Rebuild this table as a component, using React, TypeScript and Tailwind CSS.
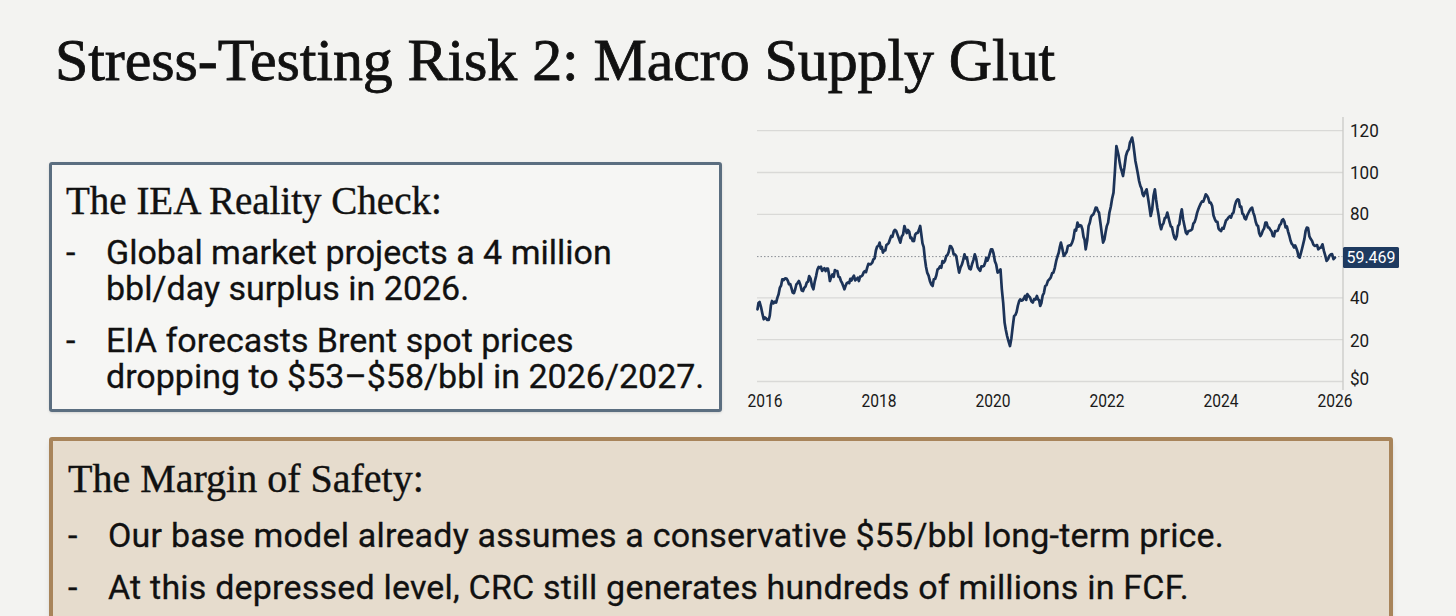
import React from "react";

const RAW: [number, number][] = [
  [65, 600], [70, 578], [80, 630], [92, 632], [100, 575], [110, 580], [125, 510], [135, 508],
  [150, 550], [165, 515], [175, 545], [190, 500], [200, 540], [210, 480], [235, 478], [240, 515],
  [255, 485], [275, 540], [295, 505], [310, 515], [330, 475], [345, 450], [360, 400], [368, 430],
  [385, 390], [400, 365], [410, 400], [420, 350], [440, 395], [458, 350], [475, 490], [488, 530],
  [500, 480], [515, 460], [530, 410], [545, 440], [552, 490], [565, 435], [580, 480], [590, 435],
  [600, 480], [615, 460], [632, 420], [645, 490], [652, 480], [662, 640], [668, 680], [675, 710],
  [685, 620], [700, 570], [720, 560], [730, 580], [740, 560], [748, 590], [760, 530], [770, 510],
  [780, 490], [790, 440], [798, 400], [805, 440], [815, 410], [825, 400], [838, 340], [850, 360],
  [858, 420], [865, 350], [882, 295], [890, 310], [900, 400], [912, 340], [925, 250], [932, 110],
  [940, 160], [948, 200], [955, 140], [962, 120], [970, 85], [978, 155], [990, 230], [998, 260],
  [1005, 240], [1015, 320], [1025, 240], [1040, 360], [1055, 310], [1075, 390], [1090, 300],
  [1100, 370], [1115, 360], [1130, 300], [1148, 255], [1160, 280], [1170, 330], [1185, 365],
  [1200, 330], [1215, 310], [1225, 270], [1245, 330], [1260, 295], [1280, 380], [1295, 340],
  [1310, 380], [1335, 330], [1350, 380], [1375, 445], [1392, 355], [1405, 395], [1420, 420],
  [1430, 405], [1440, 455], [1450, 435], [1460, 445],
];

function buildPath(): string {
  const pts = RAW.map(([zx, zy]) => [730.6 + zx / 2.416, 109.3 + zy / 3]);
  const out: [number, number][] = [];
  let k = 0;
  for (let i = 0; i < pts.length - 1; i++) {
    const [x0, y0] = pts[i];
    const [x1, y1] = pts[i + 1];
    const steps = Math.max(1, Math.round((x1 - x0) / 1.2));
    for (let s = 0; s < steps; s++) {
      const t = s / steps;
      const r = Math.sin((k + 1) * 12.9898) * 43758.5453;
      const n = (r - Math.floor(r) - 0.5) * (s === 0 ? 0 : 6);
      out.push([x0 + (x1 - x0) * t, y0 + (y1 - y0) * t + n]);
      k++;
    }
  }
  const last = pts[pts.length - 1];
  out.push([last[0], last[1]]);
  return out.map(([x, y], i) => `${i === 0 ? "M" : "L"}${x.toFixed(1)} ${y.toFixed(1)}`).join(" ");
}

const LINE = buildPath();

const gridYs = [130.7, 172.5, 214.3, 297.9, 339.7, 381.5];
const yLabels: [string, number][] = [
  ["120", 130],
  ["100", 172],
  ["80", 213],
  ["40", 297],
  ["20", 340],
  ["$0", 378],
];
const xLabels = ["2016", "2018", "2020", "2022", "2024", "2026"];

function Chart() {
  return (
    <svg width={660} height={305} viewBox="0 0 660 305" className="block">
      <g transform="translate(-740,-110)" style={{ fontFamily: "Roboto, 'Liberation Sans', sans-serif" }}>
        {gridYs.map((y) => (
          <line key={y} x1={757} x2={1343} y1={y} y2={y} stroke="#d9d9d7" strokeWidth={1.3} />
        ))}
        <line x1={757} x2={1343} y1={256.6} y2={256.6} stroke="#8a8f96" strokeWidth={1} strokeDasharray="1.5 2" />
        <line x1={1343} x2={1343} y1={117} y2={390} stroke="#c9c9c7" strokeWidth={1.3} />
        <path d={LINE} fill="none" stroke="#1c3358" strokeWidth={2.7} strokeLinejoin="round" strokeLinecap="round" />
        {yLabels.map(([t, y]) => (
          <text key={t} x={1350} y={y + 6.8} fontSize={19} fill="#1a1a1a" textLength={t.length * 9.6} lengthAdjust="spacingAndGlyphs">
            {t}
          </text>
        ))}
        <rect x={1343} y={247} width={56} height={21} rx={1.5} fill="#1e3a60" />
        <text x={1371} y={262.8} fontSize={16} fill="#ffffff" textAnchor="middle" textLength={49} lengthAdjust="spacingAndGlyphs">
          59.469
        </text>
        {xLabels.map((t, i) => (
          <text key={t} x={765 + i * 114} y={406.5} fontSize={19} fill="#1a1a1a" textAnchor="middle" textLength={35} lengthAdjust="spacingAndGlyphs">
            {t}
          </text>
        ))}
      </g>
    </svg>
  );
}

function Bullet({ children }: { children: React.ReactNode }) {
  return (
    <div className="flex">
      <span className="w-[40px] shrink-0">-</span>
      <span>{children}</span>
    </div>
  );
}

export default function App() {
  const serif = { fontFamily: "'Liberation Serif', 'Times New Roman', serif" };
  const sans = { fontFamily: "Roboto, 'Liberation Sans', sans-serif" };
  return (
    <div className="w-[1456px] h-[616px] overflow-hidden bg-[#f3f3f1] text-[#111111]">
      <h1 className="pl-[55px] pt-[30px] text-[60px] leading-none font-normal tracking-[-0.1px] [-webkit-text-stroke:0.8px_#111111]" style={serif}>
        Stress-Testing Risk 2: Macro Supply Glut
      </h1>
      <div className="flex items-start">
        <div className="ml-[49px] mt-[72px] w-[673px] h-[250px] shrink-0 border-[3px] border-[#5b6e80] rounded-[3px] bg-[#f6f6f4] pl-[14px] pt-[14px] shadow-sm">
          <div className="text-[39px] leading-[44px] [-webkit-text-stroke:0.4px_#111111]" style={serif}>
            The IEA Reality Check:
          </div>
          <div className="mt-[11px] text-[34px] leading-[36px] flex flex-col gap-[16px] [-webkit-text-stroke:0.3px_#111111]" style={sans}>
            <Bullet>
              Global market projects a 4 million
              <br />
              bbl/day surplus in 2026.
            </Bullet>
            <Bullet>
              EIA forecasts Brent spot prices
              <br />
              dropping to $53–$58/bbl in 2026/2027.
            </Bullet>
          </div>
        </div>
        <div className="ml-[18px] mt-[20px] shrink-0">
          <Chart />
        </div>
      </div>
      <div className="ml-[49px] mt-[22px] w-[1344px] h-[220px] border-[4px] border-[#a8845a] rounded-[3px] bg-[#e6dccd] pl-[15px] pt-[16px] shadow-md">
        <div className="text-[40px] leading-[44px] [-webkit-text-stroke:0.4px_#111111]" style={serif}>
          The Margin of Safety:
        </div>
        <div className="mt-[16px] text-[34px] leading-[36px] tracking-[0.2px] flex flex-col gap-[16px] [-webkit-text-stroke:0.3px_#111111]" style={sans}>
          <Bullet>Our base model already assumes a conservative $55/bbl long-term price.</Bullet>
          <Bullet>At this depressed level, CRC still generates hundreds of millions in FCF.</Bullet>
        </div>
      </div>
    </div>
  );
}
